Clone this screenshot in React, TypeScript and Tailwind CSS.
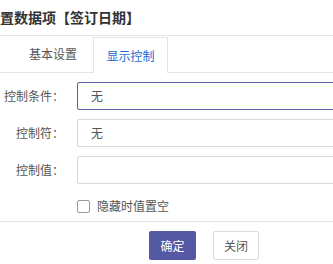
const font = { fontFamily: '"Noto Sans CJK SC", "Liberation Sans", sans-serif' };

function Row({ label, value, focused }: { label: string; value?: string; focused?: boolean }) {
  return (
    <div className="flex items-center h-[28px]">
      <div className="w-[64px] text-right text-[12px] text-[#555] leading-none">{label}</div>
      <div
        className={`ml-[13px] h-[28px] flex-1 border rounded-[2px] flex items-center pl-[13px] text-[12px] text-[#555] -mr-[10px] ${
          focused ? "border-[#5a5ea8]" : "border-[#d5d9e0]"
        }`}
      >
        {value}
      </div>
    </div>
  );
}

export default function App() {
  return (
    <div className="w-[333px] h-[264px] bg-white overflow-hidden" style={font}>
      <div className="h-[36px] border-b border-[#e5e5e5] flex items-center text-[14px] font-bold text-[#333] -ml-[14px]">
        设置数据项【签订日期】
      </div>
      <div className="h-[37px] border-b border-[#e5e5e5] flex items-end">
        <div className="w-[93px] h-[36px] flex items-center justify-end pr-[16px] text-[12px] text-[#555]">基本设置</div>
        <div className="w-[75px] h-[36px] border border-b-0 border-[#e5e5e5] bg-white -mb-px flex items-center justify-center text-[12px] text-[#1b6ad6]">
          显示控制
        </div>
      </div>
      <div className="pt-[9px] flex flex-col gap-[9px]">
        <Row label="控制条件：" value="无" focused />
        <Row label="控制符：" value="无" />
        <Row label="控制值：" />
      </div>
      <div className="flex items-center h-[28px] pl-[77px] mt-[8px]">
        <span className="w-[13px] h-[13px] border border-[#999] rounded-[2px] bg-white" />
        <span className="ml-[7px] text-[12px] text-[#555]">隐藏时值置空</span>
      </div>
      <div className="border-t border-[#e5e5e5] mt-[1px] flex gap-[17px] pt-[9px] pl-[149px]">
        <button className="w-[47px] h-[29px] rounded-[2px] bg-[#5558a3] text-white text-[12px]">确定</button>
        <button className="w-[46px] h-[29px] rounded-[2px] border border-[#dcdcdc] bg-white text-[#555] text-[12px]">关闭</button>
      </div>
    </div>
  );
}
